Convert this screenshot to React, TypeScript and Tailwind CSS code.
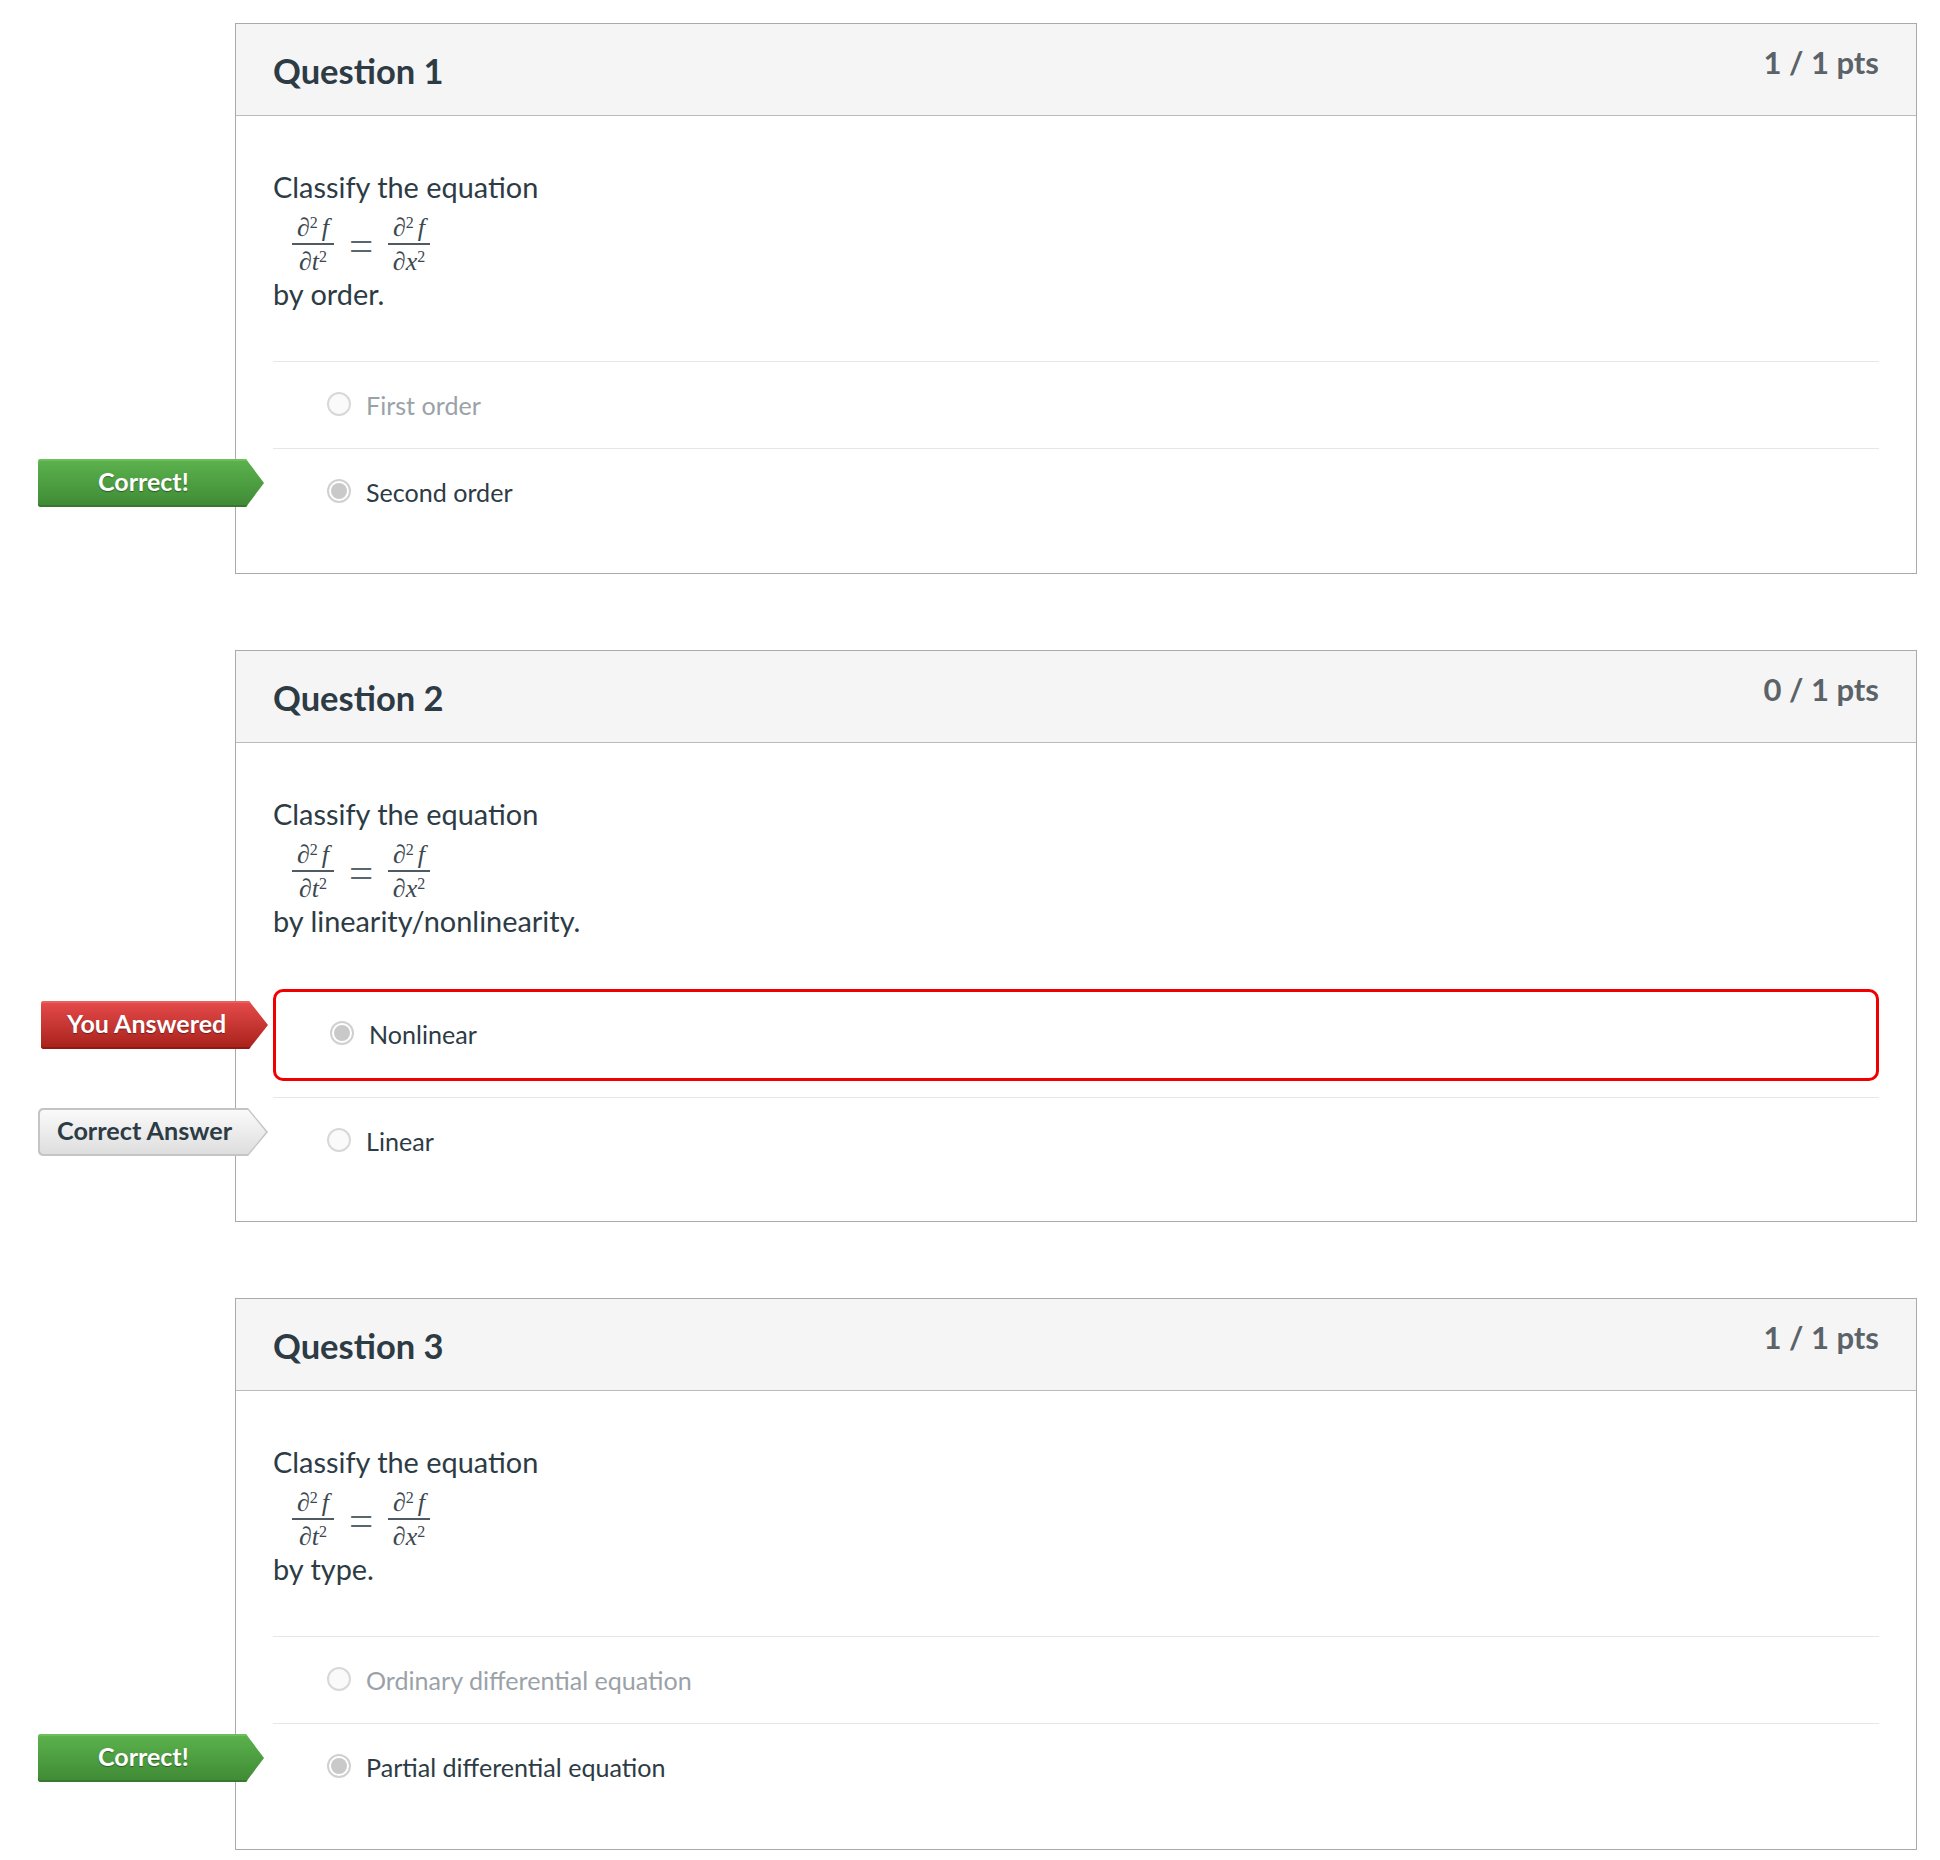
import React from 'react';

type LabelKind = 'correct' | 'answered' | 'shown';

interface AnswerData {
  text: string;
  selected?: boolean;
  muted?: boolean;
  label?: LabelKind;
}

interface QuestionData {
  title: string;
  points: string;
  suffix: string;
  bodyClass: string;
  answers: AnswerData[];
}

const questions: QuestionData[] = [
  {
    title: 'Question 1',
    points: '1 / 1 pts',
    suffix: 'by order.',
    bodyClass: 'h-[551px] mb-[76px]',
    answers: [
      { text: 'First order', muted: true },
      { text: 'Second order', selected: true, label: 'correct' },
    ],
  },
  {
    title: 'Question 2',
    points: '0 / 1 pts',
    suffix: 'by linearity/nonlinearity.',
    bodyClass: 'h-[572px] mb-[76px]',
    answers: [
      { text: 'Nonlinear', selected: true, label: 'answered' },
      { text: 'Linear', label: 'shown' },
    ],
  },
  {
    title: 'Question 3',
    points: '1 / 1 pts',
    suffix: 'by type.',
    bodyClass: 'h-[552px]',
    answers: [
      { text: 'Ordinary differential equation', muted: true },
      { text: 'Partial differential equation', selected: true, label: 'correct' },
    ],
  },
];

const Fraction = ({ bottom }: { bottom: string }) => (
  <span className="inline-flex flex-col items-center w-[42px]">
    <span className="h-[32px] leading-[29px] whitespace-nowrap border-b-2 border-[#4f5a62] w-full text-center">
      ∂<sup className="text-[16px] leading-none">2</sup>
      <i className="ml-[4px]">f</i>
    </span>
    <span className="h-[30px] leading-[33px] whitespace-nowrap">
      ∂<i>{bottom}</i>
      <sup className="text-[16px] leading-none">2</sup>
    </span>
  </span>
);

const Equation = () => (
  <div className="h-[67px] pt-[6px] pl-[19px] flex items-start gap-[15px] font-['Liberation_Serif',serif] text-[26px] text-[#3c4850]">
    <Fraction bottom="t" />
    <span className="w-[24px] mt-[11px] text-center text-[43px] leading-[43px] text-[#5a666e]">=</span>
    <Fraction bottom="x" />
  </div>
);

const AnswerLabel = ({ kind }: { kind: LabelKind }) => {
  if (kind === 'correct') {
    return (
      <div className="absolute left-[-235px] top-[10px] h-[48px] w-[226px] flex items-center pl-[60px] pb-[2px] rounded-l-[3px] bg-gradient-to-b from-[#5cb34d] to-[#3f8a35] shadow-[inset_0_2px_0_#6cbf5c,inset_0_-2px_0_#37782e] [clip-path:polygon(0_0,208px_0,100%_50%,208px_100%,0_100%)] text-white font-bold text-[25px] [text-shadow:0_1px_1px_rgba(0,0,0,0.4)] whitespace-nowrap">
        Correct!
      </div>
    );
  }
  if (kind === 'answered') {
    return (
      <div className="absolute left-[-235px] top-[9px] h-[48px] w-[227px] flex items-center pl-[26px] pb-[2px] rounded-l-[3px] bg-gradient-to-b from-[#e64b4b] to-[#a8201a] shadow-[inset_0_2px_0_#e96060,inset_0_-2px_0_#8f1a15] [clip-path:polygon(0_0,208px_0,100%_50%,208px_100%,0_100%)] text-white font-bold text-[25px] [text-shadow:0_1px_1px_rgba(0,0,0,0.4)] whitespace-nowrap">
        You Answered
      </div>
    );
  }
  return (
    <div className="absolute left-[-235px] top-[10px] h-[48px] w-[230px] rounded-l-[5px] bg-[#c4c4c4] [clip-path:polygon(0_0,210px_0,100%_50%,210px_100%,0_100%)]">
      <div className="mx-[2px] my-[2px] h-[44px] w-[226px] flex items-center pl-[17px] pb-[3px] rounded-l-[4px] bg-gradient-to-b from-[#fafafa] to-[#dedede] [clip-path:polygon(0_0,208px_0,100%_50%,208px_100%,0_100%)] text-[#2d3b45] font-bold text-[25.2px] whitespace-nowrap">
        Correct Answer
      </div>
    </div>
  );
};

const Radio = ({ selected }: { selected?: boolean }) => (
  <span
    className={`w-[24px] h-[24px] rounded-full border-2 flex items-center justify-center shrink-0 mt-[-4px] ${
      selected ? 'border-[#d0d0d0] bg-white' : 'border-[#d8d8d8] bg-[#fafafa]'
    }`}
  >
    {selected && <span className="w-[16px] h-[16px] rounded-full bg-[#c9c9c9]" />}
  </span>
);

const Answer = ({ answer }: { answer: AnswerData }) => {
  const isWrong = answer.label === 'answered';
  return (
    <div
      className={
        isWrong
          ? 'relative h-[92px] mt-[48px] mb-[16px] border-[3px] border-[#f00000] rounded-[10px] flex items-center pl-[54px] gap-[15px]'
          : 'relative h-[87px] pt-[1px] border-t border-[#e6e6e6] flex items-center pl-[54px] gap-[15px]'
      }
    >
      {answer.label && <AnswerLabel kind={answer.label} />}
      <Radio selected={answer.selected} />
      <span className={`text-[25.1px] ${answer.muted ? 'text-[#9aa2a8]' : 'text-[#2d3b45]'}`}>{answer.text}</span>
    </div>
  );
};

const QuestionCard = ({ question }: { question: QuestionData }) => (
  <div className={`ml-[235px] w-[1682px] border border-[#aaaaaa] bg-white ${question.bodyClass}`}>
    <div className="h-[92px] bg-[#f5f5f5] border-b border-[#b8bcc0] px-[37px] flex justify-between">
      <h2 className="mt-[25px] text-[34.5px] leading-[44px] font-bold text-[#2d3b45]">{question.title}</h2>
      <span className="mt-[18px] text-[31px] leading-[40px] font-bold text-[#5b6268]">{question.points}</span>
    </div>
    <div className="px-[37px] pt-[51px]">
      <p className="text-[28.9px] leading-[40px] text-[#2d3b45]">Classify the equation</p>
      <Equation />
      <p className="text-[28.9px] leading-[40px] text-[#2d3b45]">{question.suffix}</p>
      <div className="mt-[47px]">
        {question.answers.map((answer) => (
          <Answer key={answer.text} answer={answer} />
        ))}
      </div>
    </div>
  </div>
);

const App: React.FC = () => (
  <div className="w-[1940px] h-[1860px] bg-white pt-[23px] font-['Lato',sans-serif] overflow-hidden">
    {questions.map((question) => (
      <QuestionCard key={question.title} question={question} />
    ))}
  </div>
);

export default App;
